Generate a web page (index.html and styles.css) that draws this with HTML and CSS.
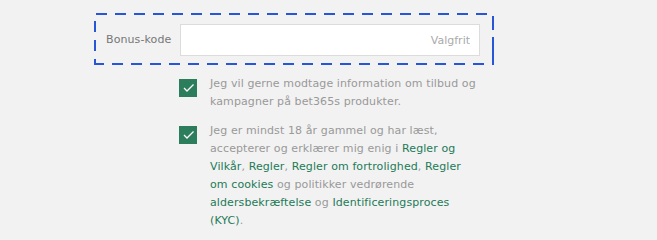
FILE: index.html
```html
<!DOCTYPE html>
<html lang="da">
<head>
<meta charset="utf-8">
<link rel="stylesheet" href="styles.css">
</head>
<body>
<div class="page">
  <div class="bonus">
    <label class="bonus-label" for="bonus">Bonus-kode</label>
    <input class="bonus-input" id="bonus" type="text" placeholder="Valgfrit">
  </div>
  <div class="checks">
    <div class="check-row">
      <span class="box"><svg width="18" height="18" viewBox="0 0 18 18"><path d="M5 9 L8 12 L14.5 5.5" fill="none" stroke="#fff" stroke-width="1.3"/></svg></span>
      <p class="check-text">Jeg vil gerne modtage information om tilbud og kampagner på bet365s produkter.</p>
    </div>
    <div class="check-row second">
      <span class="box"><svg width="18" height="18" viewBox="0 0 18 18"><path d="M5 9 L8 12 L14.5 5.5" fill="none" stroke="#fff" stroke-width="1.3"/></svg></span>
      <p class="check-text">Jeg er mindst 18 år gammel og har læst, accepterer og erklærer mig enig i <a href="#">Regler og Vilkår</a>, <a href="#">Regler</a>, <a href="#">Regler om fortrolighed</a>, <a href="#">Regler om cookies</a> og politikker vedrørende <a href="#">aldersbekræftelse</a> og <a href="#">Identificeringsproces (KYC)</a>.</p>
    </div>
  </div>
</div>
</body>
</html>
```
FILE: styles.css
```css
html, body {
  margin: 0;
  padding: 0;
  background: #f2f2f2;
}
body {
  font-family: "DejaVu Sans", Verdana, sans-serif;
  font-size: 11px;
  letter-spacing: 0.1px;
  color: #999;
}
.page {
  padding: 13px 0 0 94px;
}
.bonus {
  width: 400px;
  height: 52px;
  box-sizing: border-box;
  padding: 11px 0 0 12px;
  display: flex;
  align-items: flex-start;
  background:
    repeating-linear-gradient(90deg, transparent 0 2px, #2756d9 2px 13px, transparent 13px 19px) left top / 100% 2px no-repeat,
    repeating-linear-gradient(270deg, #2756d9 0 2px, transparent 2px 10px, #2756d9 10px 19px) left bottom / 100% 2px no-repeat,
    repeating-linear-gradient(180deg, transparent 0 8px, #2756d9 8px 19px) left top / 2px 100% no-repeat,
    linear-gradient(180deg, transparent 0 3px, #2756d9 3px 17px, transparent 17px 24px, #2756d9 24px 100%) right top / 2px 100% no-repeat;
}
.bonus-label {
  width: 74px;
  line-height: 32px;
  color: #777;
}
.bonus-input {
  width: 300px;
  height: 32px;
  box-sizing: border-box;
  margin: 0;
  border: 1px solid #dcdcdc;
  background: #fff;
  padding: 0 9px;
  text-align: right;
  font: inherit;
  color: #555;
  outline: none;
}
.bonus-input::placeholder {
  color: #aaa;
}
.checks {
  margin: 10px 0 0 85px;
}
.check-row {
  display: flex;
  gap: 13px;
  align-items: flex-start;
}
.check-row.second {
  margin-top: 11px;
}
.box {
  width: 18px;
  height: 18px;
  margin-top: 4px;
  flex: none;
  background: #2b7d5b;
  display: block;
}
.box svg {
  display: block;
}
.check-text {
  margin: 0;
  width: 270px;
  line-height: 18px;
}
.check-text a {
  color: #237a57;
  text-decoration: none;
}
```
